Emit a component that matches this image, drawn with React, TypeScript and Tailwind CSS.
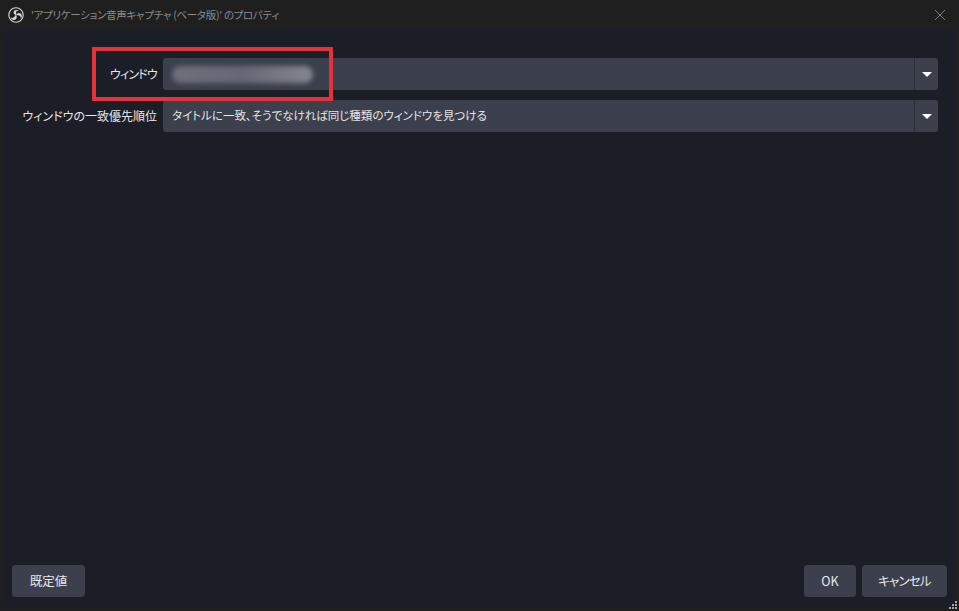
const font = "[font-family:'Noto_Sans_CJK_JP','Liberation_Sans',sans-serif] [font-feature-settings:'palt']"

function ObsLogo() {
  return (
    <svg viewBox="0 0 16 16" className="h-[16px] w-[16px]">
      <circle cx="8" cy="8" r="7.2" fill="none" stroke="#d8d8d8" strokeWidth="1.1" />
      <path d="M8 8C5.6 7.6 5 5 6.4 3.6C8 2.4 10.4 2.8 11.4 4.2C10 3.4 8.2 4 8 5.6C7.9 6.6 8.6 7.2 8 8Z" fill="#d8d8d8" />
      <path d="M8 8C9.5 9.9 8.6 12.4 6.7 12.9C4.8 13.4 2.9 12 2.5 10.2C3.7 11.3 5.6 11.2 6.4 9.8C6.9 8.9 7.1 8.2 8 8Z" fill="#d8d8d8" />
      <path d="M8 8C8.9 5.8 11.5 5.3 13 6.7C14.3 8.1 14.1 10.5 12.8 11.7C13.1 10.2 12.2 8.6 10.6 8.3C9.6 8.1 8.8 8.6 8 8Z" fill="#d8d8d8" />
    </svg>
  )
}

function Select({ children }: { children?: React.ReactNode }) {
  return (
    <div className="relative flex h-[32px] flex-1 items-center rounded-[3px] bg-[#3c404d]">
      <div className="min-w-0 flex-1 pl-[9px] text-[11.5px] text-[#e4e5e8]">{children}</div>
      <div className="flex h-full w-[24px] items-center justify-center border-l border-[#2a2e38]">
        <div className="h-0 w-0 border-x-[5px] border-t-[5px] border-x-transparent border-t-white" />
      </div>
    </div>
  )
}

function Btn({ label, w, tight }: { label: string; w: string; tight?: boolean }) {
  return (
    <button className={`h-[32px] rounded-[4px] bg-[#3c404d] text-[12.5px] text-[#e8e9ec] ${tight ? "tracking-[-0.8px]" : ""} ${w}`}>
      {label}
    </button>
  )
}

export default function App() {
  return (
    <div className={`relative flex h-[611px] w-[959px] flex-col overflow-hidden bg-[#1f1f1f] pb-[3px] pl-[2px] pr-[4px] ${font}`}>
      {/* title bar */}
      <div className="flex h-[29px] shrink-0 items-center pl-[6px] pr-[10px]">
        <ObsLogo />
        <span className="ml-[7px] text-[10.5px] tracking-[-0.3px] text-[#8a8a8a]">'アプリケーション音声キャプチャ (ベータ版)' のプロパティ</span>
        <svg viewBox="0 0 10 10" className="ml-auto h-[10px] w-[10px]" stroke="#7c7c7c" strokeWidth="1">
          <path d="M0 0L10 10M10 0L0 10" />
        </svg>
      </div>

      <div className="flex flex-1 flex-col rounded-[4px] bg-[#1b1e27] pb-[11px] pl-[10px] pr-[8px] pt-[29px]">
        {/* properties */}
        <div className="flex flex-col gap-[10px] pr-[9px]">
          <div className="flex items-center gap-[6px]">
            <label className="w-[145px] text-right text-[12px] tracking-[-0.8px] text-[#e6e7ea]">ウィンドウ</label>
            <Select>
              <div className="h-[17px] w-[141px] rounded-full bg-gradient-to-r from-[#6d707b] via-[#666975] to-[#83868f] blur-[2.5px]" />
            </Select>
          </div>
          <div className="flex items-center gap-[6px]">
            <label className="w-[145px] whitespace-nowrap text-right text-[12px] text-[#e6e7ea]">ウィンドウの一致優先順位</label>
            <Select>タイトルに一致、そうでなければ同じ種類のウィンドウを見つける</Select>
          </div>
        </div>

        {/* buttons */}
        <div className="mt-auto flex gap-[6px]">
          <Btn label="既定値" w="w-[73px]" />
          <div className="flex-1" />
          <Btn label="OK" w="w-[52px]" />
          <Btn label="キャンセル" w="w-[85px]" tight />
        </div>
      </div>

      {/* red annotation */}
      <div className="absolute left-[92px] top-[47px] h-[54px] w-[241px] border-4 border-[#e5323a]" />

      {/* resize grip */}
      <svg viewBox="0 0 10 10" className="absolute bottom-[1px] right-[1px] h-[10px] w-[10px]" fill="#a8a8a8">
        <rect x="7" y="1" width="2" height="2" />
        <rect x="4" y="4" width="2" height="2" />
        <rect x="7" y="4" width="2" height="2" />
        <rect x="1" y="7" width="2" height="2" />
        <rect x="4" y="7" width="2" height="2" />
        <rect x="7" y="7" width="2" height="2" />
      </svg>
    </div>
  )
}
